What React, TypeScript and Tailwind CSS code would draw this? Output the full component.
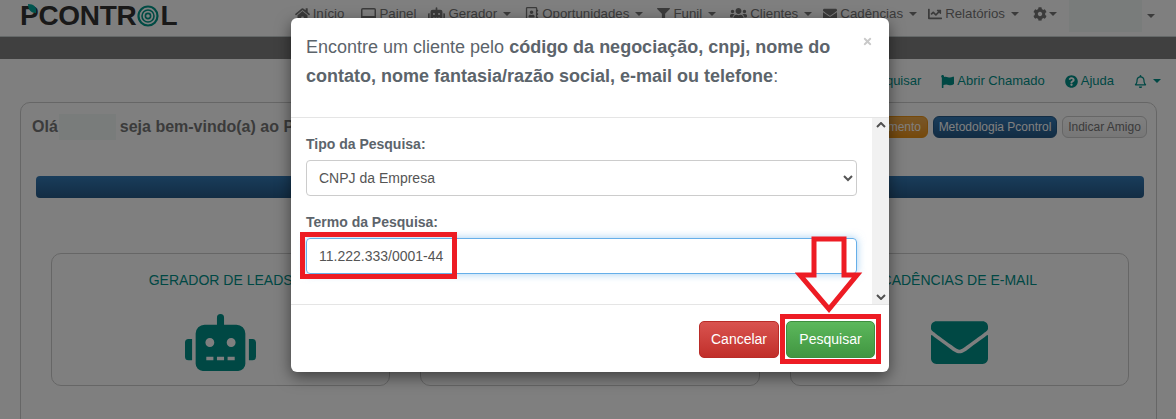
import React from "react";
import { FaHome, FaRobot, FaRegAddressBook, FaFilter, FaUsers, FaEnvelope, FaChartLine, FaCog, FaFlag, FaQuestionCircle, FaRegBell, FaSearch, FaTimes, FaFunnelDollar } from "react-icons/fa";

const Caret = () => (
  <span className="inline-block ml-[3px] w-0 h-0 border-x-[4px] border-x-transparent border-t-[4px] border-t-[#777]" />
);

const PanelIcon = () => (
  <svg width="15" height="14" viewBox="0 0 15 14" fill="none">
    <rect x="0.75" y="1.75" width="13.5" height="11" rx="1" stroke="currentColor" strokeWidth="1.5" />
    <rect x="1" y="9" width="13" height="4" fill="currentColor" />
  </svg>
);

type Item = { icon: React.ReactNode; label: string; caret?: boolean; extra?: string };
const items: Item[] = [
  { icon: <FaHome className="w-[15px] h-[14px]" />, label: "Início", extra: "mr-[3px]" },
  { icon: <PanelIcon />, label: "Painel", extra: "-mr-[2px]" },
  { icon: <FaRobot className="w-[17px] h-[14px]" />, label: "Gerador", caret: true },
  { icon: <FaRegAddressBook className="w-[14px] h-[14px]" />, label: "Oportunidades", caret: true },
  { icon: <FaFilter className="w-[13px] h-[13px]" />, label: "Funil", caret: true },
  { icon: <FaUsers className="w-[17px] h-[14px]" />, label: "Clientes", caret: true, extra: "-mr-[3px]" },
  { icon: <FaEnvelope className="w-[14px] h-[14px]" />, label: "Cadências", caret: true, extra: "-mr-[3px]" },
  { icon: <FaChartLine className="w-[14px] h-[14px]" />, label: "Relatórios", caret: true },
];

const Logo = () => (
  <div className="flex items-center ml-[20px] text-[28px] leading-none font-bold text-[#333] tracking-[-0.3px] relative">
    <span className="relative">
      P
      <svg className="absolute left-[3px] top-[2px]" width="16" height="10" viewBox="0 0 16 10">
        <path d="M5 0 C11 0 14 3 13 9 C8 9 5 6 5 0Z" fill="#00a99d" />
      </svg>
    </span>
    <span>CONTR</span>
    <svg className="mx-[1px]" width="22" height="22" viewBox="0 0 22 22" fill="none" stroke="#009688">
      <circle cx="11" cy="11" r="9.5" strokeWidth="2.2" />
      <circle cx="11" cy="11" r="6" strokeWidth="1.6" />
      <circle cx="11" cy="11" r="2.6" strokeWidth="1.6" />
    </svg>
    <span>L</span>
  </div>
);

const Card = ({ title, icon }: { title: string; icon: React.ReactNode }) => (
  <div className="h-[133px] rounded-[10px] border border-[#ccc] flex flex-col items-center pt-[17px]">
    <div className="text-[14px] leading-[18px] text-[#009089]">{title}</div>
    <div className="mt-[23px] h-[60px] flex items-center justify-center text-[#009089]">{icon}</div>
  </div>
);

export default function App() {
  return (
    <div className="relative w-[1176px] h-[419px] overflow-hidden bg-white font-['Liberation_Sans',Arial,sans-serif]">
      {/* top nav */}
      <header className="h-[37px] flex items-start justify-between border-b border-[#c8d0d0]">
        <div className="pt-[2px]"><Logo /></div>
        <nav className="flex items-start gap-[14px] text-[13.3px] text-[#777] pr-[21px] h-[32px]">
          {items.map((it) => (
            <span key={it.label} className={`flex items-center gap-[3px] whitespace-nowrap h-[28px] ${it.extra ?? ""}`}>
              {it.icon}
              <span>{it.label}</span>
              {it.caret && <Caret />}
            </span>
          ))}
          <span className="flex items-center h-[28px]">
            <FaCog className="w-[14px] h-[14px]" />
            <span className="inline-block ml-[2px] w-0 h-0 border-x-[4px] border-x-transparent border-t-[4px] border-t-[#777]" />
          </span>
          <span className="flex items-center -ml-[2px] h-[32px]">
            <span className="w-[73px] h-[32px] bg-[#f2f8f6]" />
            <span className="inline-block ml-[5px] w-0 h-0 border-x-[4px] border-x-transparent border-t-[4px] border-t-[#777]" />
          </span>
        </nav>
      </header>
      <div className="h-[22px] bg-[#808080]" />

      {/* sub nav */}
      <div className="h-[43px] flex items-center justify-end gap-[20px] pr-[15px] pt-[1px] text-[13px] text-[#009089]">
        <span className="flex items-center gap-[3px]"><FaSearch className="w-[13px] h-[13px]" />Pesquisar</span>
        <span className="flex items-center gap-[3px]"><FaFlag className="w-[13px] h-[13px]" />Abrir Chamado</span>
        <span className="flex items-center gap-[3px]"><FaQuestionCircle className="w-[13px] h-[13px]" />Ajuda</span>
        <span className="flex items-center"><FaRegBell className="w-[13px] h-[13px]" /><span className="inline-block ml-[6px] w-0 h-0 border-x-[4px] border-x-transparent border-t-[4px] border-t-[#009089]" /></span>
      </div>

      {/* panel */}
      <main className="mx-[20px] w-[1137px] h-[400px] rounded-[10px] border border-[#ccc] pl-[15px] pr-[12px]">
        <div className="flex items-center justify-between h-[47px]">
          <div className="flex items-center text-[16px] font-bold text-[#777] -ml-[4px]">
            <span>Olá</span>
            <span className="w-[57px] h-[26px] ml-[1px] mr-[4px] bg-[#f2f8f6]" />
            <span>seja bem-vindo(a) ao Pcontrol</span>
          </div>
          <div className="flex items-center gap-[5px] text-[12px] -mr-[3px]">
            <span className="h-[22px] px-[6px] flex items-center rounded-[6px] border border-[#eb9316] bg-gradient-to-b from-[#f0ad4e] to-[#eb9316] text-white">Agendar Treinamento</span>
            <span className="h-[22px] w-[124px] justify-center flex items-center rounded-[6px] border border-[#265a88] bg-gradient-to-b from-[#337ab7] to-[#265a88] text-white">Metodologia Pcontrol</span>
            <span className="h-[22px] w-[85px] justify-center flex items-center rounded-[6px] border border-[#ccc] bg-gradient-to-b from-white to-[#eee] text-[#777]">Indicar Amigo</span>
          </div>
        </div>
        <div className="mt-[26px] h-[22px] rounded-[4px] bg-gradient-to-b from-[#337ab7] to-[#265a88]" />
        <div className="mt-[55px] mx-[15px] grid grid-cols-3 gap-[30px]">
          <Card title="GERADOR DE LEADS" icon={<FaRobot className="w-[71px] h-[57px]" />} />
          <Card title="FUNIL DE VENDAS" icon={<FaFunnelDollar className="w-[50px] h-[50px]" />} />
          <Card title="CADÊNCIAS DE E-MAIL" icon={<FaEnvelope className="w-[57px] h-[57px]" />} />
        </div>
      </main>

      {/* backdrop */}
      <div className="absolute inset-0 bg-black/50" />

      {/* modal */}
      <div className="absolute left-[291px] top-[18px] w-[598px] h-[354px] rounded-[6px] bg-white shadow-[0_5px_15px_rgba(0,0,0,0.5)] flex flex-col">
        <div className="relative h-[100px] shrink-0 border-b border-[#e5e5e5] px-[15px] pt-[15px] text-[18px] leading-[29px] text-[#5c646b]">
          <p className="w-[535px]">
            Encontre um cliente pelo <b>código da negociação, cnpj, nome do contato, nome fantasia/razão social, e-mail ou telefone</b>:
          </p>
          <FaTimes className="absolute right-[16px] top-[18px] w-[11px] h-[11px] text-[#c9c9c9]" />
        </div>
        <div className="flex-1 flex min-h-0">
          <div className="flex-1 pl-[15px] pr-[15px] pt-[18px] text-[#5c646b]">
            <label className="block text-[14px] font-bold leading-[17px]">Tipo da Pesquisa:</label>
            <select defaultValue="cnpj" className="mt-[7px] block w-[551px] h-[36px] rounded-[4px] border border-[#ccc] bg-white pl-[8px] text-[14px] text-[#555]">
              <option value="cnpj">CNPJ da Empresa</option>
            </select>
            <label className="mt-[18px] block text-[14px] font-bold leading-[17px]">Termo da Pesquisa:</label>
            <input defaultValue="11.222.333/0001-44" className="mt-[7px] block w-[551px] h-[36px] rounded-[4px] border border-[#66afe9] px-[12px] text-[14px] text-[#555] shadow-[0_0_8px_rgba(102,175,233,0.6)] outline-none" />
          </div>
          <div className="w-[17px] bg-[#f1f1f1] flex flex-col justify-between items-center py-[4px] text-[#505050]">
            <svg width="10" height="6" viewBox="0 0 10 6" fill="none" stroke="currentColor" strokeWidth="2"><path d="M1 5l4-4 4 4" /></svg>
            <svg width="10" height="6" viewBox="0 0 10 6" fill="none" stroke="currentColor" strokeWidth="2"><path d="M1 1l4 4 4-4" /></svg>
          </div>
        </div>
        <div className="h-[68px] shrink-0 border-t border-[#e5e5e5] flex items-center justify-end gap-[7px] pr-[14px] pt-[1px] text-[14px] text-white">
          <button className="w-[80px] h-[37px] rounded-[5px] border border-[#b92c28] bg-gradient-to-b from-[#d9534f] to-[#c12e2a]">Cancelar</button>
          <button className="w-[89px] h-[37px] rounded-[5px] border border-[#3e8f3e] bg-gradient-to-b from-[#5cb85c] to-[#419641]">Pesquisar</button>
        </div>
      </div>

      {/* annotations */}
      <div className="absolute left-[300px] top-[232px] w-[157px] h-[47px] border-[5px] border-[#ed1c24]" />
      <div className="absolute left-[780px] top-[314px] w-[101px] h-[50px] border-[5px] border-[#ed1c24]" />
      <svg className="absolute left-[795px] top-[236px]" width="68" height="78" viewBox="0 0 68 78" fill="none" stroke="#ed1c24" strokeWidth="5">
        <path d="M19 3H49V39H62L34 73L5 39H19Z" />
      </svg>
    </div>
  );
}
